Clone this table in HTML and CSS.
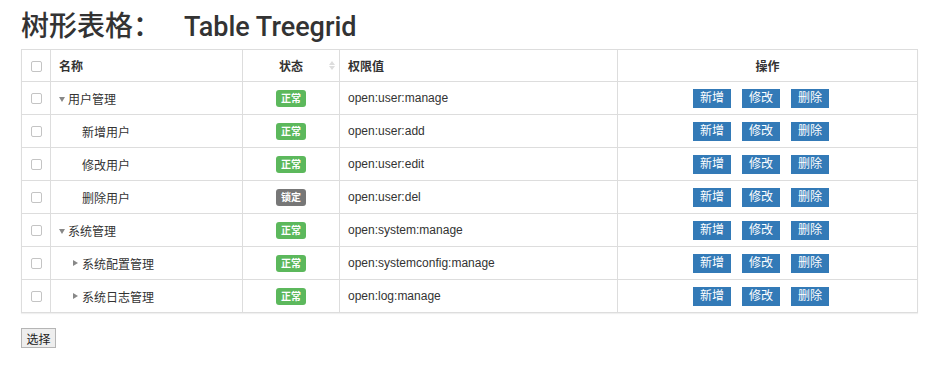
FILE: index.html
```html
<!DOCTYPE html>
<html lang="zh">
<head>
<meta charset="utf-8">
<title>Table Treegrid</title>
<link rel="stylesheet" href="styles.css">
</head>
<body>
<h1 class="title">树形表格：<span class="title-en">Table Treegrid</span></h1>
<table class="grid">
  <colgroup>
    <col class="c-chk"><col class="c-name"><col class="c-status"><col class="c-perm"><col class="c-ops">
  </colgroup>
  <thead>
    <tr>
      <th class="chk"><span class="box"></span></th>
      <th>名称</th>
      <th class="center sortable">状态<span class="sort"></span></th>
      <th>权限值</th>
      <th class="center">操作</th>
    </tr>
  </thead>
  <tbody>
    <tr>
      <td class="chk"><span class="box"></span></td>
      <td><span class="l1"><span class="arrow down"></span>用户管理</span></td>
      <td class="center"><span class="badge ok">正常</span></td>
      <td>open:user:manage</td>
      <td class="ops"><div class="btns"><span class="btn">新增</span><span class="btn">修改</span><span class="btn">删除</span></div></td>
    </tr>
    <tr>
      <td class="chk"><span class="box"></span></td>
      <td><span class="l2">新增用户</span></td>
      <td class="center"><span class="badge ok">正常</span></td>
      <td>open:user:add</td>
      <td class="ops"><div class="btns"><span class="btn">新增</span><span class="btn">修改</span><span class="btn">删除</span></div></td>
    </tr>
    <tr>
      <td class="chk"><span class="box"></span></td>
      <td><span class="l2">修改用户</span></td>
      <td class="center"><span class="badge ok">正常</span></td>
      <td>open:user:edit</td>
      <td class="ops"><div class="btns"><span class="btn">新增</span><span class="btn">修改</span><span class="btn">删除</span></div></td>
    </tr>
    <tr>
      <td class="chk"><span class="box"></span></td>
      <td><span class="l2">删除用户</span></td>
      <td class="center"><span class="badge lock">锁定</span></td>
      <td>open:user:del</td>
      <td class="ops"><div class="btns"><span class="btn">新增</span><span class="btn">修改</span><span class="btn">删除</span></div></td>
    </tr>
    <tr>
      <td class="chk"><span class="box"></span></td>
      <td><span class="l1"><span class="arrow down"></span>系统管理</span></td>
      <td class="center"><span class="badge ok">正常</span></td>
      <td>open:system:manage</td>
      <td class="ops"><div class="btns"><span class="btn">新增</span><span class="btn">修改</span><span class="btn">删除</span></div></td>
    </tr>
    <tr>
      <td class="chk"><span class="box"></span></td>
      <td><span class="l2b"><span class="arrow right"></span>系统配置管理</span></td>
      <td class="center"><span class="badge ok">正常</span></td>
      <td>open:systemconfig:manage</td>
      <td class="ops"><div class="btns"><span class="btn">新增</span><span class="btn">修改</span><span class="btn">删除</span></div></td>
    </tr>
    <tr>
      <td class="chk"><span class="box"></span></td>
      <td><span class="l2b"><span class="arrow right"></span>系统日志管理</span></td>
      <td class="center"><span class="badge ok">正常</span></td>
      <td>open:log:manage</td>
      <td class="ops"><div class="btns"><span class="btn">新增</span><span class="btn">修改</span><span class="btn">删除</span></div></td>
    </tr>
  </tbody>
</table>
<div class="footer"><button class="select">选择</button></div>
</body>
</html>
```
FILE: styles.css
```css
body {
  margin: 0;
  padding: 12px 21px 0 21px;
  font-family: "Liberation Sans", "Noto Sans CJK SC", sans-serif;
  font-size: 12px;
  color: #333;
  background: #fff;
}
.title {
  margin: 0 0 7px 0;
  font-family: Roboto, "Noto Sans CJK JP", sans-serif;
  font-weight: 500;
  font-size: 28px;
  line-height: 30px;
  color: #333;
}
.title-en {
  font-size: 27px;
  margin-left: 23px;
}
.grid {
  width: 896px;
  border-collapse: collapse;
  table-layout: fixed;
  border: 1px solid #ddd;
  box-shadow: 0 1px 1px rgba(0,0,0,0.06);
}
.c-chk { width: 29px; }
.c-name { width: 192px; }
.c-status { width: 97px; }
.c-perm { width: 278px; }
.c-ops { width: 300px; }
th, td {
  border: 1px solid #ddd;
  padding: 0 8px;
  text-align: left;
  vertical-align: middle;
  white-space: nowrap;
}
th {
  height: 31px;
  font-weight: bold;
  font-size: 12px;
}
td { height: 32px; }
.center { text-align: center; }
.chk { padding: 0; text-align: center; }
.box {
  display: inline-block;
  width: 9px;
  height: 9px;
  border: 1px solid #c4c4c4;
  border-radius: 2px;
  background: #fff;
  vertical-align: middle;
}
.sortable { position: relative; }
.sort {
  position: absolute;
  right: 7px;
  top: 11px;
  width: 0;
  height: 10px;
}
.sort::before, .sort::after {
  content: "";
  position: absolute;
  left: -3px;
  border-left: 3px solid transparent;
  border-right: 3px solid transparent;
}
.sort::before { top: 0; border-bottom: 4px solid #ddd; }
.sort::after { top: 5px; border-top: 4px solid #ddd; }
.l1 { padding-left: 0; }
.l2 { padding-left: 23px; }
.l2b { padding-left: 14px; }
.arrow {
  display: inline-block;
  width: 0;
  height: 0;
  margin-right: 3px;
  vertical-align: 2px;
}
.arrow.down {
  border-left: 3px solid transparent;
  border-right: 3px solid transparent;
  border-top: 5px solid #888;
}
.arrow.right {
  border-top: 3px solid transparent;
  border-bottom: 3px solid transparent;
  border-left: 5px solid #888;
  margin-right: 4px;
  vertical-align: 3px;
}
.badge {
  display: inline-block;
  width: 30px;
  height: 17px;
  line-height: 17px;
  border-radius: 3px;
  color: #fff;
  font-size: 10px;
  font-weight: bold;
  text-align: center;
}
.badge.ok { background: #5cb85c; }
.badge.lock { background: #777; }
.ops { padding: 0; }
.btns {
  display: flex;
  justify-content: center;
  gap: 11px;
  padding-right: 13px;
}
.btn {
  display: inline-block;
  width: 38px;
  height: 19px;
  line-height: 19px;
  background: #337ab7;
  color: #fff;
  text-align: center;
  font-size: 12px;
}
.footer { margin-top: 15px; }
.select {
  margin: 0;
  width: 35px;
  height: 20px;
  padding: 0;
  font-family: "Liberation Sans", "Noto Sans CJK SC", sans-serif;
  font-size: 12px;
  color: #222;
  background: #eee;
  border: 1px solid #b5b5b5;
  border-radius: 0;
}
```
